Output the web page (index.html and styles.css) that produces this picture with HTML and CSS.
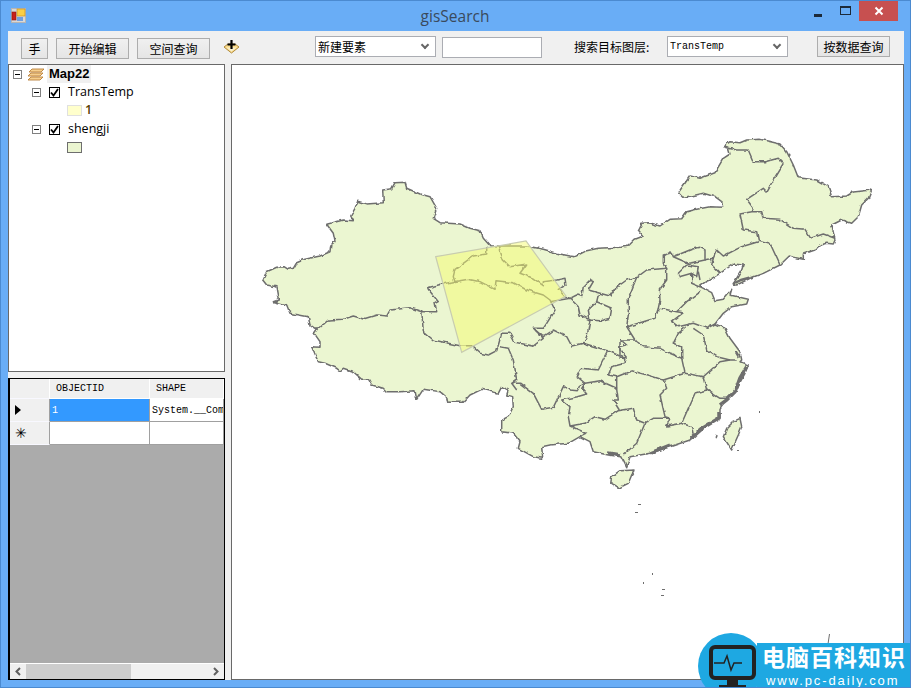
FILE: index.html
```html
<!DOCTYPE html>
<html lang="zh">
<head>
<meta charset="utf-8">
<title>gisSearch</title>
<link rel="stylesheet" href="styles.css">
</head>
<body>
<div class="window">
  <header class="titlebar">
    <svg class="app-icon" width="15" height="15" viewBox="0 0 15 15">
      <rect x="0.5" y="0.5" width="14" height="14" fill="#d8d8d8" stroke="#b5b5b5"/>
      <rect x="1" y="4" width="4" height="8" fill="#c8201c" stroke="#8a1a14" stroke-width=".6"/>
      <rect x="6" y="1" width="8" height="7" fill="#fbcf45" stroke="#c68a1c" stroke-width=".6"/>
      <rect x="6" y="9" width="6" height="4" fill="#6f9fe0"/>
    </svg>
    <div class="title">gisSearch</div>
    <div class="caption">
      <span class="cap-min"></span>
      <span class="cap-max"></span>
      <span class="cap-close">
        <svg width="10" height="10" viewBox="0 0 10 10"><path d="M1.5 1.5l7 7M8.5 1.5l-7 7" stroke="#fff" stroke-width="2"/></svg>
      </span>
    </div>
  </header>
  <div class="client">
    <div class="toolbar">
      <button class="btn btn-hand">手</button>
      <button class="btn btn-wide">开始编辑</button>
      <button class="btn btn-wide btn-query">空间查询</button>
      <svg class="add-icon" width="17" height="16" viewBox="0 0 17 16">
        <path d="M1 8l4-3h7l4 3-7.500 6z" fill="#fbdc8c" stroke="#b08a3c"/>
        <path d="M3.500 8.500h10L8.500 12.500z" fill="#f7f0d0"/>
        <path d="M8.500 1v9M4.500 5.500h8" stroke="#000" stroke-width="2.200"/>
      </svg>
      <div class="select select-new"><span>新建要素</span><i class="chev"></i></div>
      <div class="input"></div>
      <div class="label">搜索目标图层:</div>
      <div class="select select-layer"><span>TransTemp</span><i class="chev"></i></div>
      <button class="btn btn-search">按数据查询</button>
    </div>
    <div class="main">
      <aside class="side">
        <div class="tree">
          <div class="row row-root">
            <span class="exp"></span>
            <svg class="layers" width="17" height="13" viewBox="0 0 17 13">
              <path d="M4 1h12l-3 3H1z M3 5h12l-3 3H0z M3 9h12l-3 3H0z" fill="#f6cf8e" stroke="#b9803a" stroke-width=".9"/>
            </svg>
            <span class="root-name">Map22</span>
          </div>
          <div class="row row-layer">
            <span class="exp"></span>
            <span class="check"><svg width="9" height="9" viewBox="0 0 9 9"><path d="M1 4.500l2.500 3L8 1" fill="none" stroke="#000" stroke-width="1.800"/></svg></span>
            <span class="name">TransTemp</span>
          </div>
          <div class="row row-legend">
            <span class="swatch swatch-temp"></span>
            <span class="legend-text">1</span>
          </div>
          <div class="row row-layer">
            <span class="exp"></span>
            <span class="check"><svg width="9" height="9" viewBox="0 0 9 9"><path d="M1 4.500l2.500 3L8 1" fill="none" stroke="#000" stroke-width="1.800"/></svg></span>
            <span class="name">shengji</span>
          </div>
          <div class="row row-legend">
            <span class="swatch swatch-prov"></span>
          </div>
        </div>
        <div class="grid">
          <div class="grid-rows">
            <div class="cell head"></div>
            <div class="cell head col">OBJECTID</div>
            <div class="cell head col">SHAPE</div>
            <div class="cell head marker"><i class="arrow"></i></div>
            <div class="cell selected">1</div>
            <div class="cell data">System.__Com</div>
            <div class="cell head marker star">✳</div>
            <div class="cell data"></div>
            <div class="cell data"></div>
          </div>
          <div class="grid-empty"></div>
          <div class="hscroll">
            <svg width="16" height="15" viewBox="0 0 16 15"><path d="M10 4L6.500 7.500 10 11" fill="none" stroke="#606060" stroke-width="2"/></svg>
            <div class="track"><div class="thumb"></div></div>
            <svg width="17" height="15" viewBox="0 0 17 15"><path d="M7 4l3.500 3.500L7 11" fill="none" stroke="#606060" stroke-width="2"/></svg>
          </div>
        </div>
      </aside>
      <div class="map">
        <svg class="map-svg" width="672" height="614" viewBox="232 65 672 614">
          <defs>
            <filter id="rough" x="232" y="65" width="672" height="614" filterUnits="userSpaceOnUse">
              <feTurbulence type="fractalNoise" baseFrequency="0.16" numOctaves="2" seed="4"/>
              <feDisplacementMap in="SourceGraphic" scale="3.500" xChannelSelector="R" yChannelSelector="G"/>
            </filter>
          </defs>
          <g class="land" filter="url(#rough)">
            <path class="fill" d="M262.700 280L266.700 271.700 276.700 267.300 284 266.700 288.300 269.300 293.300 268.300 296.700 262.700 305 259.300 320 256 330 251.700 330.700 245 335 241.700 333.300 233.300 326.700 224.300 343.300 220 353.300 220.700 350.700 216 355 208.300 357.700 201.300 366.700 204 383.300 202.700 382.700 190 391.700 188.700 395 182.700 405 182.300 406.700 188.300 420 194 430 196.700 436.700 208.300 433.300 218.300 440 222.700 460 224 470 228.300 480 230.700 483.300 238.300 490 245.700 496.700 246 526.700 246 543.300 249.300 560 254 570 256 575 256.700 586.700 250.700 598.300 248.300 620 247.300 628.300 246 635 239.300 643.300 236 638.300 230 641.700 223.300 648.300 222.700 660 226 670 219.300 681.700 218.700 686.700 211.700 696.700 209.300 710 206.700 722.700 207.300 721.700 201.700 715 196.700 703.300 193.300 691.700 196 682.700 197.300 678.300 192.700 690 176 700 178.300 715 172.700 723.300 158.300 730 154 728.300 148.300 723.300 146.700 730 141.700 740 142.700 746.700 140 760 139.300 780 144 786.700 151.700 793.300 165 798.300 177.700 816.700 180 828.300 186.700 831.700 196.700 846.700 196 853.300 192 871.700 190 868.300 198.300 861.700 205 858.300 216.700 851.700 223.300 841.700 220 831.700 225 835 240 833.300 244 826.700 243.300 820 245 815 250 803.300 254 803.300 259.300 793.300 257.300 789.300 256 780 265 763.300 273.300 750 278.300 736.700 285 733.300 284 741.700 270 743.300 265 733.300 264 720 273.300 706.700 281.700 700 286.700 711.700 292.700 715 300.700 723.300 299.300 731.700 289.300 730 295 748.300 299.300 746.700 304 731.700 306.700 723.300 313.300 715 324 725 328.300 730 338.300 740 351.700 741.700 360 740 361.700 748.300 365 745 373.300 736.700 388.300 726.700 398.300 720 408.300 720 416.700 703.300 428.300 690 440 670 446.700 650 453.300 630 456.700 626.700 466.700 621.700 456.700 608.300 455 593.300 451.700 590 441.700 580 436.700 568.300 443.300 550 445 541.700 446.700 542.700 458.300 533.300 456.700 518.300 448.300 520 441.700 513.300 433.300 501.700 431.700 501.700 420 508.300 416.700 513.300 406.700 512.700 396.700 506.700 395 508.300 390 501.700 386.700 498.300 393.300 481.700 389.300 470 395 463.300 402.300 447.700 402.300 446.700 397.300 440 391.700 423.300 389.300 416.700 399.300 415 390.700 400 391.700 386.700 391.700 383.300 388.300 371.700 385 368.300 379 361.700 379.300 353.300 371.700 343.300 368.300 340 371 336.700 368.300 325 363.300 318.300 361.700 315 355 311.700 346.700 320 347.300 320 341.700 314.300 333.300 318 328 315 328.300 310 325 308.300 316.700 290 313.300 286.700 305 273.300 301.700 278.300 300 276 286.700 266.700 285z M620 470.700L635 470 631.700 475 628.300 483.300 618.300 488.300 610.700 483.300 611.700 476.700z M740 418.300L741.700 426.700 738.300 435 731.700 450 723.300 436.700 726.700 428.300 733.300 421.700z"/>
            <path class="lines" d="M315 328.300L319.300 328.300 328.300 320 343.300 319.300 353.300 316 363.300 319 376.700 315 386.700 316 390 310 410 307.700 421.700 311.700 436.700 311.700 435 303.300 438.300 301.700 428.300 289.300 427.700 287.700 445 283.300 468.300 279.300 480 281.700 495 289.300 496 280.700 513.300 282.700 526.700 290 543.300 295 550 300 555 310 546.700 323.300 543.300 328.300 533.300 328.300 543.300 336.700 553.300 330 566.700 336.700 571.700 346 583.300 343.300 596.700 347.300 610 351.700 625 358.300 626 356.700 620 350 620 340 635 340 643.300 346.700 660 348.300 670 353.300 681.700 358.300 685 373.300 703.300 376.700 720 361.700 730 360 736.700 360"/>
            <path class="lines" d="M421.700 310L423.300 331.700 433.300 340 460 345.700 471.700 345.700 480 353.300 488.300 355 496.700 350.700 501.700 333.300 510 333.300 515 342.300 528.300 345 533.300 346 543.300 338.300 535 330M500 346.700L508.300 348.300 513.300 360 516.700 380 511.700 383.300 516.700 390M511.700 383.300L520 383.300 533.300 393.300 541.700 409.300 553.300 407.300 563.300 386.700 570 390 577.300 390.700 580 385 585 383.300 600 380.700 616.700 388.300 618.300 400 613 400 619.300 410"/>
            <path class="lines" d="M486.700 246.700L486.700 254 473.300 256 463.300 263.300 455 269.300 453.300 276.700 455 281.700M498.300 246L503.300 260 510 266.700 526.700 264 520 273.300 533.300 278.300 543.300 285.700 543.300 281.700 556.700 280 565 278.300 566 285 558.300 289.300 565 296.700 570 298.300 576.700 295 581.700 296.700 583.300 286.700 590 280 593.300 281.700 588.300 290 600 293.300 610 296 615 288.300 626.700 280 636.700 277.300 646.700 270 666.700 268.300 663.300 263.300 663.300 255 671.700 252.700 673.300 256.700 688.300 263.300 696.700 261.700 705 260 705 250 700 247.300 691.700 249.300 673.300 256.700M663.300 255L665 255 671.700 251.700M550 301.700L570 298.300 578.300 306.700 580 315 590 320 587.300 335 583.300 343.300M598.300 295L596.700 301.700 611.700 308.300 610 318.300 600 320.700 590 320 588.300 310 596.700 301.700"/>
            <path class="lines" d="M636.700 277.300L628.300 298.300 628.300 315 626.700 326.700 635 340M626.700 326.700L643.300 321.700 655 318.300 658.300 308.300 660 300 659.300 290 666.700 280 666.700 268.300M660 308.300L676.700 311.700 686.700 301.700 698.300 293.300 700 290M676.700 311.700L683.300 312.700 671.700 321.700 678.300 326.700 693.300 323.300 706.700 328.300 715 324M686.700 326.700L678.300 333.300 673.300 343.300 681.700 346.700 681.700 358.300M693.300 328.300L703.300 335 706.700 350 716.700 356.700 730 360M678.300 273.300L686.700 265 698.300 266.700 696.700 276.700 691.700 273.300 679.300 276.700 678.300 273.300M691.700 273.300L691.700 283.300 700 286.700M698.300 271.700L700 280"/>
            <path class="lines" d="M783.300 163.300L778.300 158.300 765 161.700 753.300 161.700 748.300 150 736.700 150 728.300 148.300M783.300 163.300L773.300 180 766.700 191.700 763.300 188.300 746.700 199.300 753.300 208.300 751.700 211.700 740 214 743.300 230 756.700 231.700 758.300 240 770 243.300 780 265M751.700 211.700L761.700 211.700 763.300 218.300 780 219.300 793.300 228.300 805 229.300 810.700 238.300 823.300 234 835 238.300M758.300 241.700L741.700 246.700 723.300 256 716.700 250 713.300 258.300 705 260M713.300 258.300L711.700 265 716.700 270 720 273.300"/>
            <path class="lines" d="M608.300 350L598.300 370 581.700 368.300 577.300 376.700 585 383.300 581.700 388.300 586.700 394 577.300 396.700 561.700 400 570 406.700 568.300 416.700 570 426 586.700 433.300 580 436.700M570 426L585 423.300 595 416.700 605 419.300 618.300 410.700 633.300 408.300 636.700 420 645 423.300 636.700 443.300 623.300 455M645 423.300L653.300 418.300 670 418.300 666.700 426 681.700 423.300 691.700 426.700 693.300 435M616.700 376.700L616.700 388.300M616.700 376.700L608.300 375 611.700 366.700 625 363.300 626 356.700M616.700 376.700L631.700 370.700 653.300 376.700 663.300 380 666.700 388.300 660 395 665 416.700 670 418.300M663.300 380L685 373.300M703.300 376.700L706.700 390 695 393.300 688.300 408.300 681.700 423.300M706.700 390L720 398.300 726.700 398.300M620 339.300L626.700 345 620 346.700 620 358.300 625 358.300"/>
            <path class="thick" d="M746.700 366.700L740 378 735 391.700 726.700 400 720 405M719 412L719 418 703 428 691.700 438M670 445L650 453M608 453L620 455"/>
            <path class="thick thick-small" d="M736 352L739 357M716.700 435L715.500 438M733 284L741 280 750 277.500"/>
          </g>
          <polygon class="temp" points="435.700,256.700 526,241 566,296 461.700,352.300"/>
          <g class="specks">
            <rect x="638" y="504" width="3" height="1"/>
            <rect x="635" y="512" width="3" height="1"/>
            <rect x="652" y="573" width="1" height="2"/>
            <rect x="643" y="582" width="1" height="2"/>
            <rect x="662" y="589" width="3" height="1"/>
            <rect x="661" y="595" width="3" height="1"/>
            <rect x="759" y="411" width="1" height="2"/>
            <rect x="737" y="450" width="2" height="1"/>
          </g>
          <path class="sliver" d="M829.500 634L828 644"/>
        </svg>
      </div>
    </div>
  </div>
  <div class="watermark">
    <div class="wm-disc">
      <svg width="48" height="46" viewBox="0 0 48 46">
        <rect x="2" y="2" width="43" height="31" rx="4" fill="#1ea8e2" stroke="#222" stroke-width="4"/>
        <path d="M5 18h10l3-7 4 14 3-7h8" fill="none" stroke="#222" stroke-width="1.500"/>
        <path d="M18 35h11v5h8v5H10v-5h8z" fill="#222"/>
      </svg>
    </div>
    <div class="wm-band">
      <div class="wm-cn">电脑百科知识</div>
      <div class="wm-en">www.pc-daily.com</div>
    </div>
  </div>
</div>
</body>
</html>
```
FILE: styles.css
```css
* { box-sizing: border-box; }
html, body { margin: 0; padding: 0; }
body { width: 911px; height: 688px; overflow: hidden; background: #69adf6; }

.window {
  position: relative;
  width: 911px;
  height: 688px;
  display: flex;
  flex-direction: column;
  background: #69adf6;
  border: 1px solid #4b8ad0;
  overflow: hidden;
  font-family: "Noto Sans CJK SC", "Liberation Sans", sans-serif;
}

/* title bar */
.titlebar { flex: 0 0 30px; display: flex; align-items: center; padding-left: 10px; }
.app-icon { flex: none; margin-top: -1px; }
.title {
  flex: 1;
  text-align: center;
  font: 15.500px "Open Sans", sans-serif;
  color: #3a4a5c;
  padding-left: 70px;
}
.caption { display: flex; align-items: flex-start; align-self: flex-start; margin-right: 12px; }
.cap-min { width: 8px; height: 3px; background: #1c2a3a; margin: 13px 18px 0 0; }
.cap-max { width: 11px; height: 9px; border: 1px solid #1c2a3a; border-top-width: 2px; margin: 5px 8px 0 0; }
.cap-close { width: 39px; height: 21px; background: #c75050; display: flex; align-items: center; justify-content: center; margin-top: -1px; }

/* client */
.client { flex: 1; margin: 0 6px 7px 7px; background: #f0f0f0; display: flex; flex-direction: column; }
.toolbar { flex: 0 0 33px; display: flex; align-items: center; padding-left: 13px; }
.btn {
  height: 21px;
  padding: 0;
  border: 1px solid #adadad;
  background: linear-gradient(#f0f0f0, #e5e5e5);
  font: 12px "Noto Sans CJK SC", sans-serif;
  color: #000;
  margin-top: 2px;
}
.btn-hand { width: 27px; }
.btn-wide { width: 73px; margin-left: 8px; }
.btn-query { margin-left: 8px; }
.add-icon { flex: none; margin: 0 0 2px 13px; }
.select {
  height: 21px;
  margin-top: -2px;
  background: #fff;
  border: 1px solid #abadb3;
  display: flex;
  align-items: center;
  justify-content: space-between;
  padding: 0 5px 0 2px;
}
.select-new { width: 121px; margin-left: 75px; font: 12px "Noto Sans CJK SC", sans-serif; }
.select-layer { width: 121px; margin-left: 17px; font: 10px "Liberation Mono", monospace; }
.chev { width: 6px; height: 6px; border: solid #666; border-width: 0 2px 2px 0; transform: rotate(45deg); margin: -3px 2px 0 0; }
.input { width: 100px; height: 21px; margin: 0 0 1px 6px; background: #fff; border: 1px solid #abadb3; }
.label { width: 76px; margin: -3px 0 0 32px; font-size: 12px; white-space: nowrap; color: #000; }
.btn-search { width: 73px; margin-left: 29px; margin-top: -2px; }

/* main */
.main { flex: 1; display: flex; gap: 6px; min-height: 0; }
.side { flex: 0 0 217px; display: flex; flex-direction: column; gap: 6px; }

.tree { flex: 0 0 308px; background: #fff; border: 1px solid #696969; padding: 0 0 0 4px; font: 12.500px "Open Sans", sans-serif; color: #000; }
.row { height: 18.400px; display: flex; align-items: center; }
.exp { position: relative; flex: none; width: 9px; height: 9px; border: 1px solid #808080; background: #fff; }
.exp::after { content: ""; position: absolute; left: 1px; top: 3px; width: 5px; height: 1px; background: #000; }
.layers { flex: none; margin-left: 6px; }
.root-name { font-weight: 700; font-family: "Liberation Sans", sans-serif; font-size: 13px; margin-left: 2px; padding: 0 2px; background: #f0f0f0; line-height: 18px; }
.row-layer { padding-left: 19px; }
.check { flex: none; width: 11px; height: 11px; margin-left: 8px; border: 1px solid #000; background: #fff; display: flex; }
.name { margin-left: 8px; margin-top: -2px; }
.row-legend { padding-left: 54px; }
.swatch { flex: none; width: 15px; height: 11px; border: 1px solid #ddd; }
.swatch-temp { background: #ffffcc; border-color: #e0e0e0; }
.swatch-prov { background: #ebf5d0; border-color: #6e6e6e; }
.legend-text { margin: -2px 0 0 3px; color: #5a4000; font-weight: 600; }

.grid { flex: 1; display: flex; flex-direction: column; border: 1px solid #000; background: #ababab; border-width: 1px 1px 1px 2px; min-height: 0; }
.grid-rows { display: grid; grid-template-columns: 40px 100px 1fr; grid-template-rows: 20px 23px 23px; overflow: hidden; font: 10px "Liberation Mono", monospace; color: #000; flex: none; }
.cell { display: flex; align-items: center; padding-left: 2px; background: #fff; border: solid #a0a0a0; border-width: 0 1px 1px 0; white-space: nowrap; overflow: hidden; }
.head { background: #f0f0f0; border-color: #fff #fff #f8f8ff #f0f0f0; }
.col { padding-left: 6px; border-right-color: #fff; border-bottom-color: #fff; }
.marker { padding-left: 5px; border-right-color: #a0a0a0; }
.star { font: 14px "DejaVu Sans", sans-serif; color: #000; }
.arrow { width: 0; height: 0; border: solid transparent; border-width: 5px 0 5px 6px; border-left-color: #000; }
.selected { background: #3399ff; color: #fff; }
.grid-empty { flex: 1; background: #ababab; }
.hscroll { flex: 0 0 16px; display: flex; align-items: center; background: #f0f0f0; border-top: 1px solid #fff; }
.hscroll svg { flex: none; }
.track { flex: 1; height: 100%; }
.thumb { width: 105px; height: 100%; background: #cdcdcd; }

/* map */
.map { flex: 1; background: #fff; border: 1px solid #696969; overflow: hidden; }
.map-svg { display: block; }
.land .fill { fill: #ebf6d1; stroke: #6e6e6e; stroke-width: 1.500; stroke-linejoin: round; }
.land .lines { fill: none; stroke: #6e6e6e; stroke-width: 1.500; stroke-linejoin: round; }
.land .thick { fill: none; stroke: #6e6e6e; stroke-width: 3.500; }
.land .thick-small { stroke-width: 2.500; }
.temp { fill: #f6fb70; fill-opacity: .5; stroke: #c8ccb0; stroke-width: 1.200; }
.specks rect { fill: #6e6e6e; }
.sliver { stroke: #6e6e6e; stroke-width: 1; fill: none; }

/* watermark overlay */
.watermark { position: absolute; left: 697px; top: 632px; width: 214px; height: 56px; }
.wm-disc {
  position: absolute; left: 0; top: 0; width: 66px; height: 66px;
  border-radius: 50%;
  background: #1ea8e2;
  padding: 12px 0 0 11px;
}
.wm-band {
  position: absolute; left: 59px; top: 10px; width: 155px; height: 46px;
  background: #1ea8e2;
  color: #fff;
  padding: 1px 0 0 5px;
}
.wm-cn { font: 700 23px/24px "Noto Sans CJK SC", sans-serif; letter-spacing: 1px; white-space: nowrap; }
.wm-en { font: 13px/13px "Liberation Sans", sans-serif; letter-spacing: 1.900px; white-space: nowrap; margin: 6px 0 0 4px; }
```
